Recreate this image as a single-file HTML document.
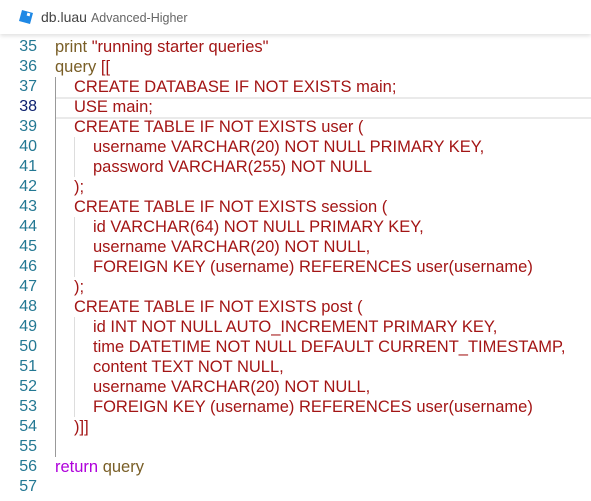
<!DOCTYPE html>
<html><head><style>
body{margin:0;width:591px;height:501px;background:#fff;overflow:hidden;font-family:"Liberation Sans",sans-serif;position:relative}
.hdr{position:absolute;left:0;top:0;width:591px;height:34px;background:#fff;box-shadow:0 2px 4px rgba(0,0,0,.12);z-index:3}
.hdr .t{position:absolute;left:41px;top:9px;font-size:14px;color:#444}
.hdr .s{font-size:12.5px;color:#666;margin-left:4px}
.ln{position:absolute;left:0;width:37px;text-align:right;font-size:16px;color:#237893;height:20px;line-height:20px}
.c{position:absolute;font-size:16.5px;height:20px;line-height:21px;white-space:pre;color:#a31515}
.f{color:#795e26}.k{color:#af00db}
.g{position:absolute;width:1px}
</style></head><body>
<div class="hdr">
<svg style="position:absolute;left:19px;top:10px" width="14" height="14" viewBox="0 0 14 14"><path d="M3 0 L14 3 L11 14 L0 11 Z" fill="#1e88e5"/><rect x="8" y="3" width="3" height="3" fill="#fff" transform="rotate(15 9.5 4.5)"/></svg>
<div class="t">db.luau<span class="s">Advanced-Higher</span></div>
</div>
<div style="position:absolute;left:55px;top:97px;width:536px;height:18px;border:1px solid #eaeaea;border-width:2px 0"></div>
<div class="g" style="left:55px;top:77px;height:380px;background:#999"></div>
<div class="g" style="left:74px;top:137px;height:40px;background:#ddd"></div>
<div class="g" style="left:74px;top:217px;height:60px;background:#ddd"></div>
<div class="g" style="left:74px;top:317px;height:100px;background:#ddd"></div>
<div class="ln" style="top:37px">35</div><div class="c f" style="left:55px;top:37px">print <span style="color:#a31515">"running starter queries"</span></div>
<div class="ln" style="top:57px">36</div><div class="c f" style="left:55px;top:57px">query <span style="color:#a31515">[[</span></div>
<div class="ln" style="top:77px">37</div><div class="c" style="left:74px;top:77px">CREATE DATABASE IF NOT EXISTS main;</div>
<div class="ln" style="top:97px;color:#0b216f">38</div><div class="c" style="left:74px;top:97px">USE main;</div>
<div class="ln" style="top:117px">39</div><div class="c" style="left:74px;top:117px">CREATE TABLE IF NOT EXISTS user (</div>
<div class="ln" style="top:137px">40</div><div class="c" style="left:93px;top:137px">username VARCHAR(20) NOT NULL PRIMARY KEY,</div>
<div class="ln" style="top:157px">41</div><div class="c" style="left:93px;top:157px">password VARCHAR(255) NOT NULL</div>
<div class="ln" style="top:177px">42</div><div class="c" style="left:74px;top:177px">);</div>
<div class="ln" style="top:197px">43</div><div class="c" style="left:74px;top:197px">CREATE TABLE IF NOT EXISTS session (</div>
<div class="ln" style="top:217px">44</div><div class="c" style="left:93px;top:217px">id VARCHAR(64) NOT NULL PRIMARY KEY,</div>
<div class="ln" style="top:237px">45</div><div class="c" style="left:93px;top:237px">username VARCHAR(20) NOT NULL,</div>
<div class="ln" style="top:257px">46</div><div class="c" style="left:93px;top:257px">FOREIGN KEY (username) REFERENCES user(username)</div>
<div class="ln" style="top:277px">47</div><div class="c" style="left:74px;top:277px">);</div>
<div class="ln" style="top:297px">48</div><div class="c" style="left:74px;top:297px">CREATE TABLE IF NOT EXISTS post (</div>
<div class="ln" style="top:317px">49</div><div class="c" style="left:93px;top:317px">id INT NOT NULL AUTO_INCREMENT PRIMARY KEY,</div>
<div class="ln" style="top:337px">50</div><div class="c" style="left:93px;top:337px">time DATETIME NOT NULL DEFAULT CURRENT_TIMESTAMP,</div>
<div class="ln" style="top:357px">51</div><div class="c" style="left:93px;top:357px">content TEXT NOT NULL,</div>
<div class="ln" style="top:377px">52</div><div class="c" style="left:93px;top:377px">username VARCHAR(20) NOT NULL,</div>
<div class="ln" style="top:397px">53</div><div class="c" style="left:93px;top:397px">FOREIGN KEY (username) REFERENCES user(username)</div>
<div class="ln" style="top:417px">54</div><div class="c" style="left:74px;top:417px">)]]</div>
<div class="ln" style="top:437px">55</div>
<div class="ln" style="top:457px">56</div><div class="c f" style="left:55px;top:457px"><span class="k">return</span> query</div>
<div class="ln" style="top:477px">57</div>
</body></html>
